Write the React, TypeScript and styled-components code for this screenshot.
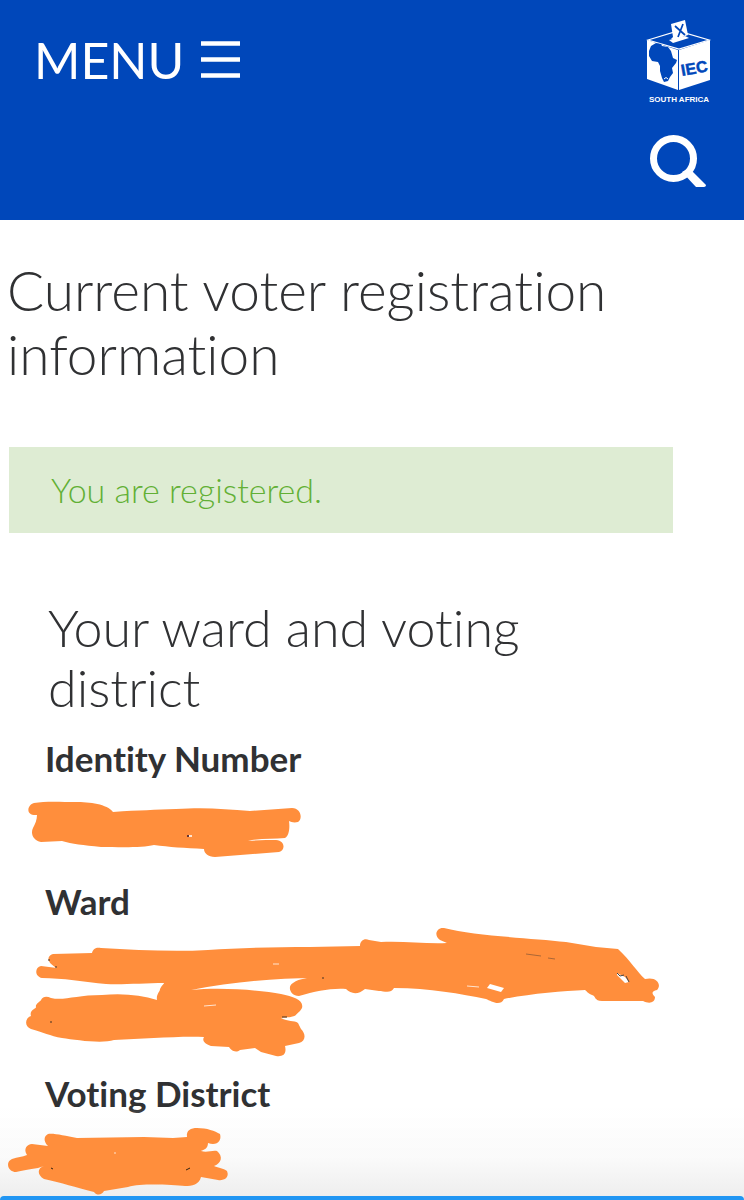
import React from "react";
import styled, { createGlobalStyle } from "styled-components";

const GlobalStyle = createGlobalStyle`
  * { box-sizing: border-box; }
  body {
    margin: 0;
    background: #fff;
    color: #303133;
    font-family: Lato, "Open Sans", sans-serif;
    font-variant-ligatures: none;
  }
`;

const Page = styled.div`
  min-height: 100vh;
  overflow-x: hidden;
`;

const Header = styled.header`
  display: flex;
  justify-content: space-between;
  align-items: flex-start;
  min-height: 220px;
  padding: 20px 32px 32px 34px;
  background: #0047ba;
`;

const PlainButton = styled.button`
  display: flex;
  align-items: center;
  padding: 0;
  border: 0;
  background: none;
  color: #fff;
  font: inherit;
  cursor: pointer;
`;

const MenuButton = styled(PlainButton)`
  gap: 17px;
  height: 80px;
  font-size: 50px;
  line-height: 80px;
`;

const Brand = styled.div`
  display: flex;
  flex-direction: column;
  align-items: center;
  gap: 30px;
`;

const LogoLink = styled.a`
  display: block;
  height: 84px;
`;

const Title = styled.h1`
  margin: 38px 7px 61px;
  font-size: 55px;
  font-weight: 300;
  line-height: 64px;
`;

const Alert = styled.p`
  width: calc(100% - 80px);
  margin: 0 0 64px 9px;
  padding: 0 42px;
  background: #deecd3;
  color: #62b035;
  font-size: 34px;
  font-weight: 300;
  line-height: 86px;
`;

const Subtitle = styled.h2`
  max-width: 600px;
  margin: 0 48px 19px;
  font-size: 52px;
  font-weight: 300;
  line-height: 60px;
`;

const Details = styled.dl`
  margin: 0;
`;

const Label = styled.dt`
  padding: 0 45px;
  font-size: 35px;
  font-weight: 700;
  line-height: 44px;
`;

const Value = styled.dd`
  position: relative;
  z-index: 1;
  margin: 0;

  svg { display: block; }
`;

const BottomSheet = styled.div`
  position: fixed;
  inset: auto 0 0;
  padding-top: 88px;
  background: linear-gradient(#fff0 0, #fafafa 50px, #eeeeee 88px);
`;

const SheetEdge = styled.div`
  height: 4px;
  border-radius: 12px 12px 0 0;
  background: #2196f3;
`;

const Logo = () => (
  <svg width="66" height="84" viewBox="-1 0 66 84" role="img" aria-label="IEC South Africa">
    <path d="M1 20 31 11 62 20 32 29Z" fill="#0047ba" stroke="#fff" strokeWidth="1.2" />
    <path d="M0 20 31 30V70L0 59Z" fill="#fff" />
    <path d="M32 30 63 20V60L32 70Z" fill="#fff" />
    <path d="M22 20 38 16 42 18 26 23Z" fill="#fff" />
    <path d="M24 4 38 0 41 15 27 20 24 19 26 17Z" fill="#fff" />
    <path d="m28 6 10 9M36 4l-5 13" stroke="#0047ba" strokeWidth="1.7" fill="none" />
    <path d="M4 26 9 23 14 24 15 26 21 27 24 31 26 38 30 40 29 43 25 48 26 53 23 57 21 61 17 62 15 58 13 51 13 46 11 42 5 41 2 36 2 31Z" fill="#0047ba" />
    <path d="M17 59q2-3 4 0" stroke="#fff" fill="none" />
    <text x="35" y="56" transform="rotate(-10 35 56)" fontFamily="Liberation Sans, sans-serif" fontSize="16" fontWeight="700" fill="#0047ba" stroke="#0047ba" strokeWidth=".5">IEC</text>
    <text x="32" y="82" textAnchor="middle" fontFamily="Liberation Sans, sans-serif" fontSize="8" fontWeight="700" fill="#fff">SOUTH AFRICA</text>
  </svg>
);

const MenuIcon = () => (
  <svg width="39" height="38" viewBox="0 0 39 38" aria-hidden="true">
    <path d="M0 2.5h39M0 18.5h39M0 34.5h39" stroke="#fff" strokeWidth="4.6" />
  </svg>
);

const SearchIcon = () => (
  <svg width="58" height="54" viewBox="0 0 58 54" aria-hidden="true">
    <circle cx="23.5" cy="24.5" r="20" fill="none" stroke="#fff" strokeWidth="7" />
    <path d="m32 38 7-4 17 17c0 1-1 2-2 2h-8Z" fill="#fff" />
  </svg>
);

const ORANGE = "#ff8e3c";

const IdentityScribble = () => (
  <svg width="680" height="99" viewBox="0 780 680 99" role="img" aria-label="Identity number hidden">
    <path
      fill={ORANGE}
      d="M34 803C45 801 62 802 75 802C90 802 107 804 113 812C140 810 155 810 176 809C205 807 225 809 250 811L292 808C301 808 303 819 298 822C294 823 291 822 289 821C290 828 289 836 285 838C274 839 260 838 248 841C258 840 269 840 276 840C286 841 285 851 279 852L215 857C208 857 204 853 204 849C185 848 169 847 154 845C143 848 119 847 101 847C83 845 72 844 62 841L41 842C34 841 30 834 33 828C35 824 37 820 37 815C25 816 27 805 34 803Z"
    />
    <path d="M187 835h2v2h-2Z" fill="#633" />
    <path d="M189 835h3v2h-3Z" fill="#ffe4cf" />
  </svg>
);

const WardScribble = () => (
  <svg width="680" height="148" viewBox="0 923 680 148" role="img" aria-label="Ward hidden">
    <path
      fill={ORANGE}
      d="M53 954L92 953C93 948 97 947 101 948C136 950 173 952 208 950C239 948 276 947 310 947L360 946C360 940 365 938 369 940L381 942C405 941 426 944 447 943L440 940C433 935 437 927 444 928C475 936 530 938 566 942L596 947L618 949C631 961 637 972 645 979C657 976 662 985 657 990C652 991 651 993 655 997C655 1003 649 1004 643 1001L602 1001C594 1001 596 996 592 995C587 993 587 991 585 990C563 991 528 994 504 999C500 1007 491 1001 486 999C461 994 430 988 394 988C391 994 384 991 379 991L365 989C358 995 351 994 346 989C331 988 316 991 299 996C290 996 287 986 293 983C300 978 309 978 314 978C276 978 232 982 191 990C220 987 260 990 281 994C294 997 304 1000 302 1008C300 1012 297 1013 296 1015C292 1018 285 1017 281 1018C288 1022 294 1020 298 1023L301 1029C306 1034 306 1041 299 1043L285 1046C287 1054 283 1057 276 1056L261 1052L255 1048L240 1050C235 1054 230 1049 229 1047L211 1046C204 1044 202 1040 204 1037C177 1036 144 1039 114 1040C102 1044 76 1040 62 1038C50 1036 43 1032 31 1029C24 1026 25 1018 31 1016C29 1010 36 1009 36 1007C35 1004 40 1002 41 1000C43 996 47 996 51 998C64 1001 76 995 102 995C123 993 141 995 157 1000C156 994 160 992 160 989C162 985 164 984 164 983C144 983 121 985 106 984C85 982 62 978 42 978C34 976 35 967 41 966L57 968C47 963 46 956 53 954Z"
    />
    <path d="m487 988 3-4 14 4-3 4-14-4Z" fill="#fff" />
    <path d="m617 973 8 4 4 5-4 1-8-8Z" fill="#fff" />
    <path d="m617 973 3 3 4-1M626 976l3 6" stroke="#444" fill="none" />
    <path d="m526 954 15 2M548 958l7 1" stroke="#704b32" strokeWidth=".6" />
    <path d="m467 986 12 1M273 964l6 0M204 1006l12-1" stroke="#ffe4cf" />
    <path d="M48 960h2M55 967h2M322 978h2M50 1022h2M282 1017h5" stroke="#443322" />
  </svg>
);

const DistrictScribble = () => (
  <svg width="680" height="81" viewBox="0 1115 680 81" role="img" aria-label="Voting district hidden">
    <path
      fill={ORANGE}
      d="M48 1134C54 1133 65 1136 77 1138L144 1137L173 1138L187 1137C186 1130 191 1128 197 1128C207 1128 215 1131 220 1134C222 1141 217 1146 208 1143C208 1149 203 1150 201 1151C207 1153 212 1150 217 1151C223 1156 222 1163 214 1166C219 1168 223 1168 227 1171C230 1178 223 1181 218 1180L201 1177C199 1185 192 1186 185 1186C172 1185 142 1183 128 1187L104 1191C102 1195 97 1196 94 1192C75 1187 62 1183 44 1179C37 1175 37 1168 44 1166L38 1168C29 1169 22 1171 16 1172C8 1172 5 1162 12 1159C18 1157 22 1157 27 1155C23 1149 27 1144 32 1144L48 1146C43 1141 44 1136 48 1134Z"
    />
    <path d="m51 1168 2 1M186 1170l4-2" stroke="#332211" />
    <path d="M115 1152v2" stroke="#ffe4cf" />
  </svg>
);

export default function App() {
  return (
    <Page>
      <GlobalStyle />
      <Header>
        <MenuButton type="button">
          MENU
          <MenuIcon />
        </MenuButton>
        <Brand>
          <LogoLink href="#">
            <Logo />
          </LogoLink>
          <PlainButton type="button" aria-label="Search">
            <SearchIcon />
          </PlainButton>
        </Brand>
      </Header>
      <main>
        <Title>Current voter registration information</Title>
        <Alert role="status">You are registered.</Alert>
        <Subtitle>Your ward and voting district</Subtitle>
        <Details>
          <Label>Identity Number</Label>
          <Value>
            <IdentityScribble />
          </Value>
          <Label>Ward</Label>
          <Value>
            <WardScribble />
          </Value>
          <Label>Voting District</Label>
          <Value>
            <DistrictScribble />
          </Value>
        </Details>
      </main>
      <BottomSheet>
        <SheetEdge />
      </BottomSheet>
    </Page>
  );
}
